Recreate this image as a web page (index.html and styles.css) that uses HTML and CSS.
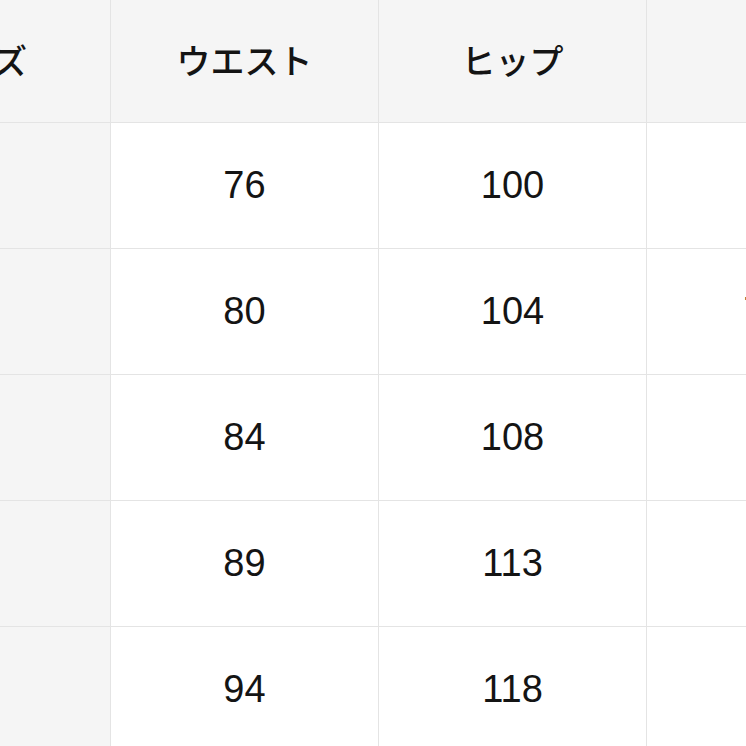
FILE: index.html
```html
<!DOCTYPE html>
<html lang="ja">
<head>
<meta charset="utf-8">
<link rel="stylesheet" href="styles.css">
</head>
<body>
<table class="size-table">
  <thead>
    <tr>
      <th class="label">サイズ</th>
      <th>ウエスト</th>
      <th>ヒップ</th>
      <th>股下</th>
    </tr>
  </thead>
  <tbody>
    <tr><th class="label">S</th><td>76</td><td>100</td><td>71</td></tr>
    <tr><th class="label">M</th><td>80</td><td>104</td><td>72.5</td></tr>
    <tr><th class="label">L</th><td>84</td><td>108</td><td>73</td></tr>
    <tr><th class="label">LL</th><td>89</td><td>113</td><td>74</td></tr>
    <tr><th class="label">3L</th><td>94</td><td>118</td><td>75</td></tr>
  </tbody>
</table>
</body>
</html>
```
FILE: styles.css
```css
html, body {
  margin: 0;
  padding: 0;
  background: #ffffff;
  overflow: hidden;
  width: 746px;
  height: 746px;
}
.size-table {
  width: 1073px;
  border-collapse: collapse;
  table-layout: fixed;
  margin-left: -158px;
  margin-top: -4px;
  font-family: "Liberation Sans", "Noto Sans CJK JP", sans-serif;
  color: #141414;
}
.size-table th,
.size-table td {
  width: 267px;
  height: 125px;
  padding: 0;
  border: 1px solid #e4e4e4;
  text-align: center;
  vertical-align: middle;
  font-weight: 400;
}
.size-table thead th {
  background: #f5f5f5;
  font-family: "Noto Sans CJK JP", sans-serif;
  font-weight: 500;
  font-size: 34px;
}
.size-table tbody th.label {
  background: #f5f5f5;
  font-size: 38px;
}
.size-table td {
  font-size: 38px;
  background: #ffffff;
}
```
